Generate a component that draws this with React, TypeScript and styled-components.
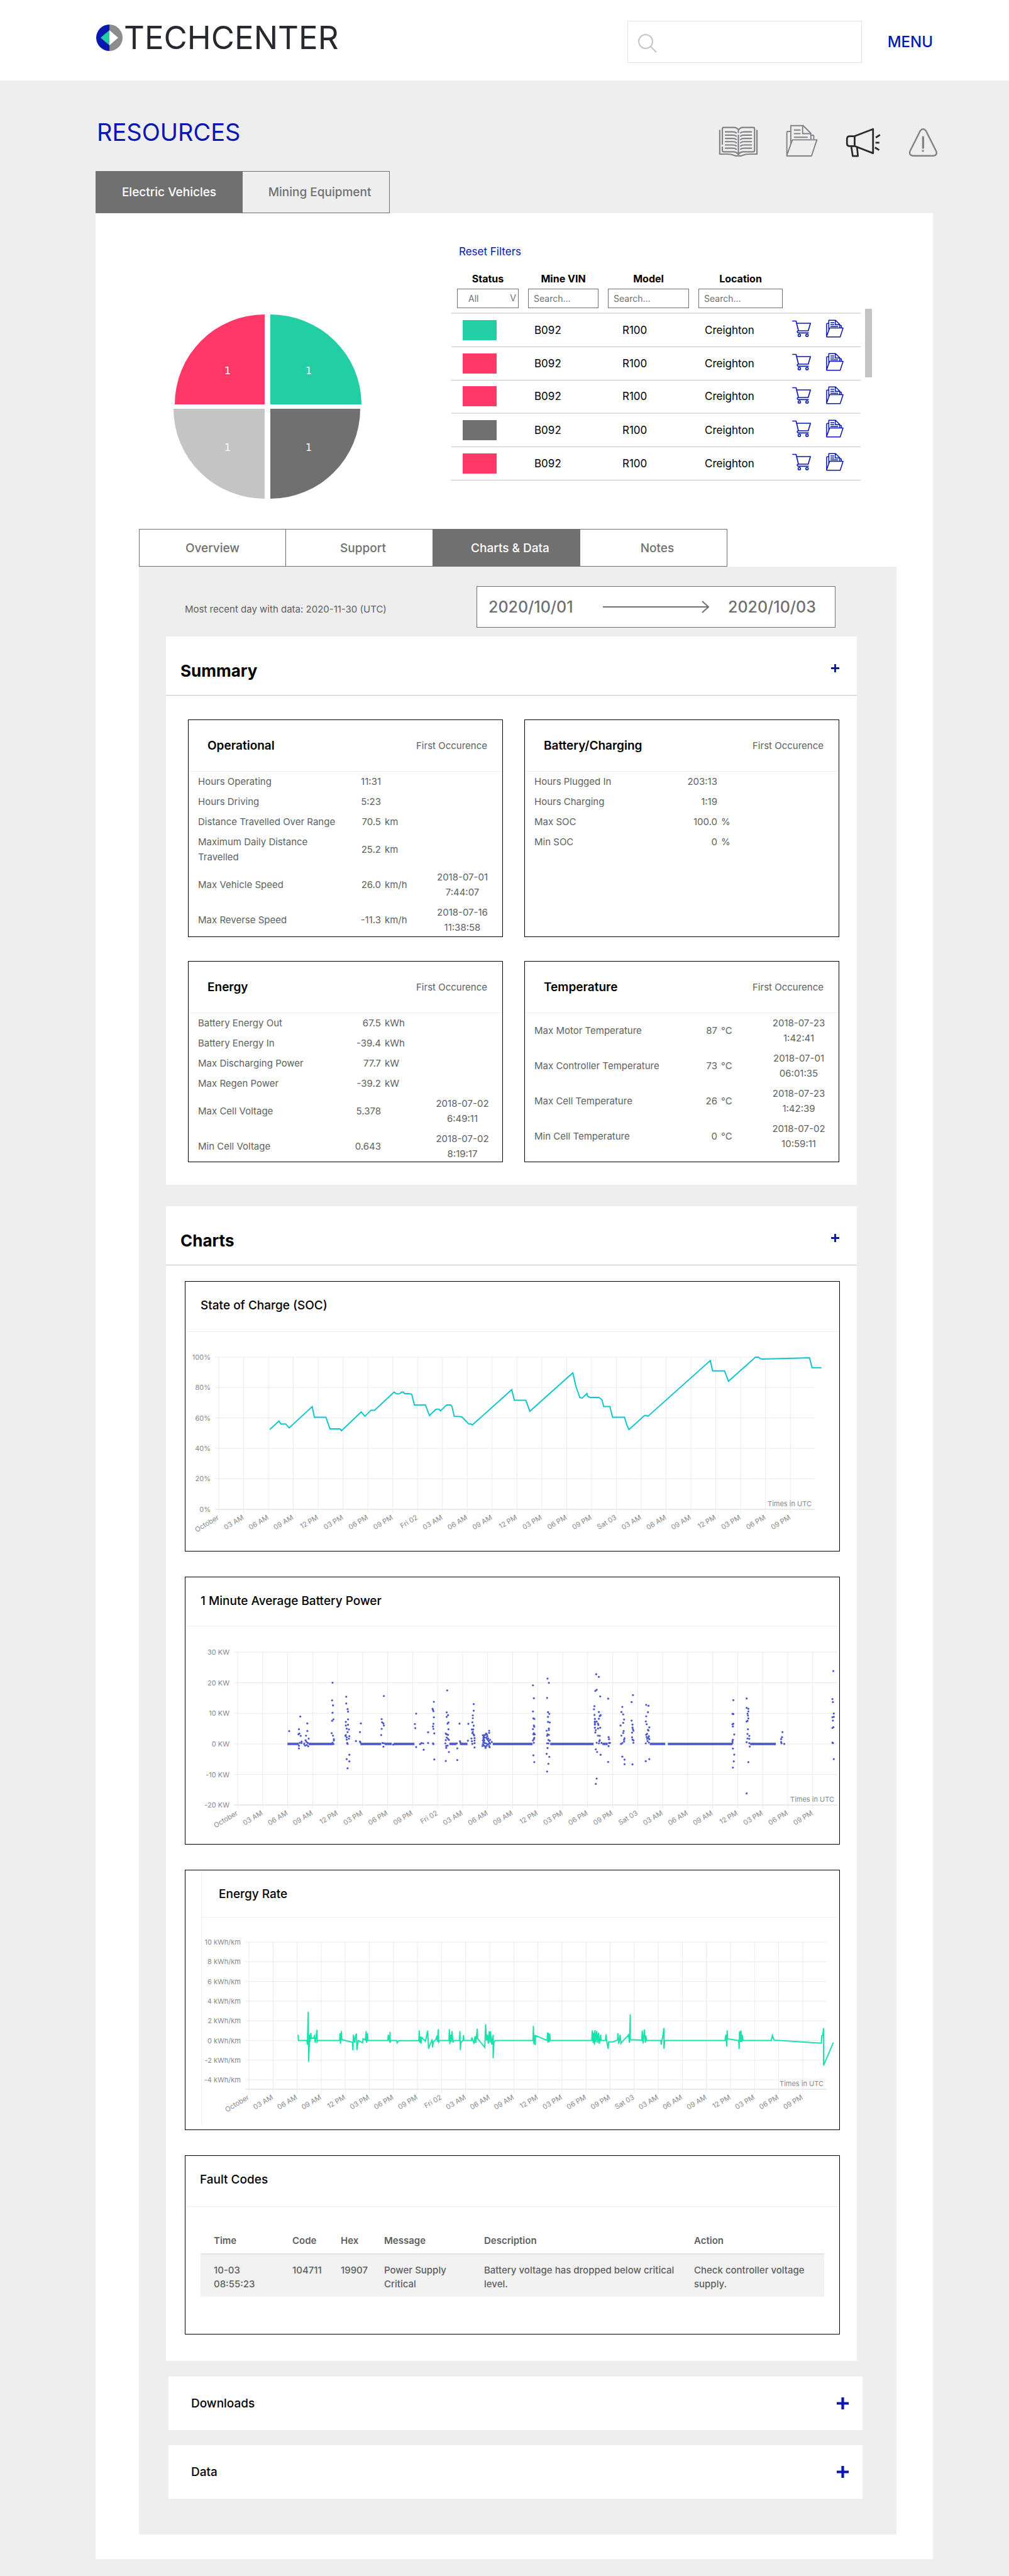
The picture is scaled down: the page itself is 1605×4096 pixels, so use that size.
import React from "react";
import styled, { createGlobalStyle } from "styled-components";

const c = {
  blue: "#0817b0",
  green: "#22cea4",
  pink: "#ff3868",
  grey: "#707070",
  silver: "#c4c4c4",
  page: "#eeeeee",
  text: "#5d5f61",
  faint: "#eeefef",
};

const Global = createGlobalStyle`
  *, *::before, *::after { box-sizing: border-box; }
  body { margin: 0; background: ${c.page}; font-family: Inter, "Liberation Sans", sans-serif; color: #000; }
  button, input, select { font: inherit; color: inherit; }
  button { cursor: pointer; background: none; border: 0; padding: 0; }
  h1, h2, h3 { margin: 0; }
  table { border-collapse: collapse; }
  svg { display: block; }
`;

/* ---------- top bar ---------- */

const TopBar = styled.header`
  display: flex;
  align-items: flex-start;
  justify-content: space-between;
  height: 128px;
  padding: 33px 121px 0 153px;
  background: #fff;
`;

const Brand = styled.a`
  display: flex;
  align-items: center;
  gap: 2px;
  margin-top: 5px;
  color: #26292d;
  font-size: 51px;
  line-height: 44px;
  text-decoration: none;
`;

const TopTools = styled.div`
  display: flex;
  align-items: center;
  gap: 41px;
`;

const SearchBox = styled.label`
  display: flex;
  align-items: center;
  gap: 12px;
  width: 373px;
  height: 67px;
  padding: 0 16px;
  border: 1px solid #e2e2e2;

  input {
    flex: 1;
    min-width: 0;
    border: 0;
    outline: 0;
    font-size: 20px;
  }
`;

const MenuButton = styled.button`
  color: ${c.blue};
  font-size: 24px;
  font-weight: 500;
  line-height: 32px;
`;

/* ---------- page frame ---------- */

const Page = styled.main`
  padding: 60px 121px 27px 152px;
`;

const TitleRow = styled.div`
  display: flex;
  justify-content: space-between;
  height: 62px;
  margin-bottom: 22px;
`;

const PageTitle = styled.h1`
  padding-left: 2px;
  color: ${c.blue};
  font-size: 38px;
  font-weight: 400;
  line-height: 44px;
`;

const IconLinks = styled.nav`
  display: flex;
  align-items: flex-end;
  gap: 44px;
  margin-right: -8px;
`;

const IconButton = styled.button<{ $color: string }>`
  color: ${(p) => p.$color};
`;

const Tabs = styled.div`
  display: flex;
`;

const Tab = styled.button<{ $active?: boolean; $height: number }>`
  width: 234px;
  height: ${(p) => p.$height}px;
  border: 1px solid ${c.grey};
  background: ${(p) => (p.$active ? c.grey : "transparent")};
  color: ${(p) => (p.$active ? "#fff" : c.grey)};
  font-size: 19px;
  font-weight: 500;
  text-align: center;

  & + & {
    padding-left: 12px;
    border-left: 0;
  }
`;

const Panel = styled.section`
  padding: 51px 58px 39px 69px;
  background: #fff;
`;

/* ---------- fleet overview ---------- */

const Fleet = styled.div`
  display: flex;
  align-items: flex-start;
  padding-right: 39px;
  padding-bottom: 48px;
`;

const PieBox = styled.div`
  flex: none;
  width: 300px;
  margin: 110px 142px 0 55px;
`;

const FleetList = styled.div`
  flex: 1;
`;

const ResetButton = styled.button`
  display: block;
  margin: 0 0 23px 12px;
  color: ${c.blue};
  font-size: 17px;
  line-height: 20px;
`;

const Scroller = styled.div`
  display: flex;
  align-items: flex-start;
  gap: 7px;
`;

const ScrollThumb = styled.div`
  flex: none;
  width: 11px;
  height: 109px;
  margin-top: 58px;
  background: ${c.silver};
`;

const FleetTable = styled.table`
  flex: 1;
  table-layout: fixed;

  th {
    padding: 0 15px 7px 0;
    font-size: 16px;
    font-weight: 700;
    line-height: 20px;
    vertical-align: top;
  }
  th:first-child { padding-left: 9px; }
  td {
    height: 53px;
    padding: 0 0 0 10px;
    border-top: 1px solid ${c.silver};
    font-size: 17px;
  }
  tbody tr:nth-child(3n + 1) td { border-top: 2px solid #dedede; }
  tbody tr:last-child td { border-bottom: 1px solid ${c.silver}; }
  td:first-child { padding-left: 18px; }
  td:nth-child(3) { padding-left: 23px; }
  td:nth-child(n + 5) { padding-left: 0; }
`;

const field = `
  display: block;
  width: 100%;
  height: 31px;
  border: 1px solid ${c.grey};
  border-radius: 0;
  background: #fff;
  color: ${c.grey};
  font-size: 14px;
  font-weight: 400;
`;

const FilterInput = styled.input`
  ${field}
  margin-top: 6px;
  padding: 0 8px;
  &::placeholder { color: ${c.grey}; opacity: 1; }
`;

const SelectWrap = styled.span`
  display: block;
  position: relative;
  margin-top: 6px;

  span {
    position: absolute;
    right: 4px;
    top: 5px;
    color: ${c.grey};
    font-size: 14px;
    font-weight: 400;
    pointer-events: none;
  }
`;

const FilterSelect = styled.select`
  ${field}
  appearance: none;
  padding: 0 17px;
`;

const Swatch = styled.span<{ $color: string }>`
  display: block;
  width: 54px;
  height: 32px;
  background: ${(p) => p.$color};
`;

/* ---------- details ---------- */

const Details = styled.div`
  padding: 31px 63px 57px 43px;
  background: ${c.page};
`;

const RangeRow = styled.div`
  display: flex;
  align-items: center;
  justify-content: space-between;
  margin-bottom: 14px;
  padding: 0 34px 0 30px;
`;

const RangeNote = styled.p`
  margin: 8px 0 0;
  color: ${c.text};
  font-size: 15px;
  line-height: 20px;
`;

const RangeBox = styled.div`
  display: flex;
  align-items: center;
  justify-content: space-between;
  width: 571px;
  height: 66px;
  padding: 0 18px;
  border: 1px solid ${c.grey};
  background: #fff;
  color: ${c.grey};

  input {
    width: 152px;
    padding: 0;
    border: 0;
    font-size: 25px;
    font-weight: 500;
  }
`;

const Card = styled.section`
  margin-bottom: 34px;
  background: #fff;
`;

const CardHead = styled.div`
  display: flex;
  align-items: flex-start;
  justify-content: space-between;
  padding: 40px 28px 23px 23px;
  border-bottom: 1px solid ${c.silver};

  h2 {
    font-size: 26px;
    font-weight: 700;
    line-height: 30px;
  }
  button {
    margin-top: 4px;
    color: ${c.blue};
  }
`;

const StatGrid = styled.div`
  display: grid;
  grid-template-columns: 1fr 1fr;
  grid-template-rows: 346px 320px;
  gap: 38px 34px;
  padding: 38px 28px 36px 35px;
`;

const StatCard = styled.section`
  border: 1px solid #000;
`;

const StatHead = styled.div`
  display: flex;
  align-items: center;
  justify-content: space-between;
  height: 82px;
  padding: 0 24px 0 30px;
  border-bottom: 1px solid ${c.faint};
  color: ${c.text};
  font-size: 15px;

  h3 {
    color: #000;
    font-size: 19px;
    font-weight: 600;
  }
`;

const StatTable = styled.table`
  width: 100%;
  table-layout: fixed;
  color: ${c.text};
  font-size: 15px;
  line-height: 24px;

  th, td { padding: 4px 0; font-weight: 400; text-align: left; }
  th { padding-left: 15px; }
  td:nth-child(2) { text-align: right; }
  td:nth-child(3) { padding-left: 6px; }
  td:nth-child(4) { text-align: center; }
  td span { display: block; }
`;

const ChartStack = styled.div`
  display: grid;
  gap: 40px;
  padding: 25px 27px 42px 30px;
`;

const ChartCard = styled.section<{ $height: number }>`
  min-height: ${(p) => p.$height}px;
  border: 1px solid #000;
`;

const ChartInset = styled.div`
  margin: 0 5px 0 25px;
  border-left: 1px solid ${c.faint};
`;

const ChartTitle = styled.h3<{ $height: number; $indent: number }>`
  height: ${(p) => p.$height}px;
  padding: 26px 0 0 ${(p) => p.$indent}px;
  border-bottom: 1px solid ${c.faint};
  font-size: 19px;
  font-weight: 500;
  line-height: 24px;
`;

const Plot = styled.svg`
  width: 100%;
  height: auto;
  overflow: visible;

  text {
    fill: #85888b;
    font-size: 11px;
    text-anchor: end;
  }
`;

const FaultTable = styled.table`
  width: calc(100% - 48px);
  margin: 34px 24px 0;
  table-layout: fixed;
  color: ${c.text};
  font-size: 15px;
  line-height: 22px;

  th {
    padding: 9px 0 9px 21px;
    font-weight: 600;
    text-align: left;
  }
  td {
    padding: 14px 0 9px 21px;
    border-top: 2px solid #e2e2e2;
    background: #f2f2f2;
    font-weight: 500;
    vertical-align: top;
  }
  td span { display: block; }
`;

const Accordion = styled.div`
  display: grid;
  gap: 24px;
  margin: -9px -9px 0 4px;
`;

const AccordionItem = styled.button`
  display: flex;
  align-items: center;
  justify-content: space-between;
  height: 85px;
  padding: 0 22px 0 36px;
  background: #fff;
  color: #000;
  font-size: 19px;
  font-weight: 500;

  svg { color: ${c.blue}; }
`;

/* ---------- drawings ---------- */

const LogoMark = () => (
  <svg width="42" height="42" viewBox="0 0 42 42" aria-hidden="true">
    <path d="M21 0A21 21 0 0 0 21 42Z" fill={c.blue} />
    <path d="M21 0A21 21 0 0 1 21 42Z" fill="#8c8c8c" />
    <path d="M21 9L7 21L21 33Z" fill={c.green} />
    <path d="M21 9L35 21L21 33Z" fill="#fff" />
  </svg>
);

const Magnifier = () => (
  <svg width="30" height="34" viewBox="0 -4 30 34" fill="none" stroke={c.silver} strokeWidth="2" aria-hidden="true">
    <circle cx="12" cy="12" r="11" />
    <path d="M20 20L29 29" />
  </svg>
);

const Book = () => (
  <svg width="63" height="50" viewBox="50 53 230 182" fill="none" stroke="currentColor" strokeWidth="8" strokeLinecap="round" strokeLinejoin="round" aria-hidden="true">
    <path d="M165 92V75Q155 62 138 62H80Q72 62 72 70V160M72 176V197Q72 204 80 204H138Q158 206 165 220Q172 206 192 204H250Q259 204 259 197V70Q259 62 250 62H192Q175 62 165 78M165 108V220" />
    <path d="M57 80V217H100Q125 217 143 225Q155 230 165 226Q175 230 187 225Q205 217 230 217H273V80" />
    {[88, 107, 126, 145, 164, 183].map((y) => (
      <path key={y} d={`M90 ${y}H132Q146 ${y} 153 ${y + 6}M241 ${y}H198Q184 ${y} 178 ${y + 6}`} />
    ))}
  </svg>
);

const Folder = ({ width, height }: { width: number; height: number }) => (
  <svg width={width} height={height} viewBox="450 49 187 190" fill="none" stroke="currentColor" strokeWidth={width > 40 ? 7 : 10} strokeLinejoin="round" aria-hidden="true">
    <path d="M479 89H462Q456 89 456 96V232H600L631 138H488L456 228" />
    <path d="M479 160V55H551L596 100V136M548 57V102H594M597 111H608Q613 111 613 117V136" />
    <path d="M500 81H533M500 102H533M500 123H575" strokeLinecap="round" />
  </svg>
);

const Megaphone = () => (
  <svg width="56" height="47" viewBox="784 60 202 170" fill="none" stroke="currentColor" strokeWidth="10" strokeLinejoin="round" aria-hidden="true">
    <path d="M836 109H808Q792 109 792 125V150Q792 166 808 166H836ZM836 109L942 68V207L836 166" />
    <path d="M817 170L825 223H855L850 174" />
    <path d="M958 117L982 101M956 146H978M953 174L977 189" />
  </svg>
);

const Alert = () => (
  <svg width="47" height="47" viewBox="1135 70 171 170" fill="none" stroke="currentColor" strokeWidth="9" strokeLinecap="round" strokeLinejoin="round" aria-hidden="true">
    <path d="M1204 87Q1220 68 1236 87L1296 206Q1304 226 1282 232H1160Q1136 228 1144 206Z" />
    <path d="M1220 124V186" strokeWidth="12" />
    <circle cx="1219" cy="204" r="6" fill="currentColor" stroke="none" />
  </svg>
);

const Cart = () => (
  <svg width="30" height="27" viewBox="53 61 110 98" fill="none" stroke="currentColor" strokeWidth="6" strokeLinejoin="round" aria-hidden="true">
    <path d="M54 66H76L90 123H147L160 79H80M90 123Q82 124 83 130Q84 135 90 135H150" />
    <circle cx="95" cy="149" r="7" />
    <circle cx="140" cy="149" r="7" />
  </svg>
);

const Plus = ({ size }: { size: number }) => (
  <svg width={size} height={size} viewBox="0 0 18 18" stroke="currentColor" strokeWidth="4" aria-hidden="true">
    <path d="M9 0V18M0 9H18" />
  </svg>
);

const LongArrow = () => (
  <svg width="170" height="20" viewBox="0 0 170 20" fill="none" stroke={c.grey} strokeWidth="2" aria-hidden="true">
    <path d="M0 10H168M158 1L168 10L158 19" />
  </svg>
);

const PieText = styled.text`
  fill: #fff;
  font: 16px "DejaVu Sans", sans-serif;
  text-anchor: middle;
`;

const Pie = () => (
  <svg width="300" height="293" viewBox="0 0 300 293" role="img" aria-label="Vehicles by status">
    <path d="M145 0V143H2A143 143 0 0 1 145 0Z" fill={c.pink} />
    <path d="M154 0V143H299A145 143 0 0 0 154 0Z" fill={c.green} />
    <path d="M145 293V150H0A145 143 0 0 0 145 293Z" fill={c.silver} />
    <path d="M154 293V150H297A143 143 0 0 1 154 293Z" fill={c.grey} />
    <PieText x="86" y="95">1</PieText>
    <PieText x="215" y="95">1</PieText>
    <PieText x="86" y="217">1</PieText>
    <PieText x="215" y="217">1</PieText>
  </svg>
);

/* ---------- charts ---------- */

type Point = [number, number];

const hours = ["October", "03 AM", "06 AM", "09 AM", "12 PM", "03 PM", "06 PM", "09 PM"];
const ticks = [...hours, "Fri 02", ...hours.slice(1), "Sat 03", ...hours.slice(1)];

interface AxesProps {
  left: number;
  right: number;
  top: number;
  bottom: number;
  step: number;
  rowStep: number;
  rows: string[];
}

const Axes = ({ left, right, top, bottom, step, rowStep, rows }: AxesProps) => (
  <g>
    <g stroke="#e9eaeb">
      {rows.map((r, i) => (
        <line key={r} x1={left - 6} x2={right} y1={top + i * rowStep} y2={top + i * rowStep} />
      ))}
      {ticks.map((_, i) => (
        <line key={i} x1={left + i * step} x2={left + i * step} y1={top} y2={bottom + 6} />
      ))}
      <line x1={left - 6} x2={right} y1={bottom} y2={bottom} strokeWidth="2" />
    </g>
    {rows.map((r, i) => (
      <text key={r} x={left - 13} y={top + i * rowStep + 4}>{r}</text>
    ))}
    {ticks.map((t, i) => (
      <text key={i} transform={`translate(${left + i * step + 1} ${bottom + 15}) rotate(-31)`}>{t}</text>
    ))}
    <text x={right - 5} y={bottom - 5}>Times in UTC</text>
  </g>
);

const place = (x0: number, y0: number, ky: number) => ([x, y]: Point): Point => [
  (x - x0) * 0.7037,
  (y - y0) * ky,
];

const parse = (s: string): Point[] => s.split(" ").map((p) => p.split(",").map(Number) as Point);

const toLine = (pts: Point[]) => pts.map(([x, y]) => `${x.toFixed(1)},${y.toFixed(1)}`).join(" ");

const soc = parse(
  "228,1000 249,965 253,977 264,977 272,993 324,905 329,949 355,949 364,997 387,997 390,1005 435,927 443,945 457,920 465,920 509,845 515,852 522,851 526,845 530,845 533,851 543,851 549,854 555,898 580,898 589,942 604,916 611,916 614,923 628,898 637,898 640,905 645,945 662,947 678,977 683,977 686,981 775,835 781,879 807,879 816,924 913,765 920,820 929,867 934,870 945,851 947,863 952,867 972,867 979,877 983,905 997,905 1003,949 1030,949 1035,980 1040,1000 1075,942 1079,942 1083,945 1224,714 1229,757 1256,757 1265,800 1326,700 1333,700 1336,706 1341,708 1448,703 1454,744 1475,744"
);

const power = parse(
  "272,871 297,793 294,861 295,884 293,888 298,896 300,926 296,933 300,934 294,949 294,963 313,830 313,870 310,895 309,920 311,928 316,911 314,934 308,948 315,952 312,945 370,613 369,707 371,734 370,773 372,808 369,816 368,882 371,895 373,914 373,921 370,933 372,940 401,688 401,724 404,754 405,767 405,808 400,822 400,841 405,837 402,858 407,862 404,876 400,892 408,898 402,904 407,911 402,916 403,934 404,939 399,896 408,997 402,1020 408,1032 404,1069 423,924 434,830 432,876 432,926 433,932 481,807 482,824 485,830 486,841 481,859 480,892 486,684 485,954 483,934 486,936 507,943 556,833 557,855 559,778 559,956 568,940 571,935 575,936 576,970 586,877 586,934 596,752 598,765 597,758 599,715 599,797 598,832 597,846 598,859 600,883 597,936 598,940 600,1022 629,654 628,771 631,786 628,795 632,825 630,831 632,861 626,884 628,888 631,891 628,905 631,912 626,919 633,918 625,936 627,960 627,950 630,948 633,982 626,1030 652,963 652,1025 657,831 658,925 659,932 651,936 677,832 676,922 689,727 689,762 687,787 687,802 686,824 689,842 685,862 688,862 687,875 686,882 689,888 690,894 684,910 691,908 691,921 685,925 691,935 686,939 691,958 710,893 713,893 712,900 711,907 714,905 712,914 710,920 713,922 711,930 714,934 710,940 712,947 709,950 715,952 717,884 719,889 716,890 720,898 718,905 719,912 717,936 720,942 718,950 716,960 722,910 721,918 724,869 724,880 726,918 723,925 725,933 722,940 726,938 724,950 725,957 730,929 823,627 825,696 823,766 824,803 826,806 825,841 826,848 823,860 825,882 827,888 824,888 826,907 825,914 823,921 825,933 824,1000 826,1036 856,591 859,614 855,694 857,770 860,779 857,795 857,822 861,825 859,857 859,865 854,869 856,888 859,891 855,896 858,918 861,923 855,936 858,936 856,961 854,992 860,1008 858,1045 855,1086 966,568 972,582 967,651 964,657 975,686 962,738 961,755 972,769 962,785 976,786 974,791 963,806 972,805 963,820 967,820 963,827 970,831 963,836 971,838 963,853 970,857 975,853 965,866 964,878 970,895 974,896 974,919 973,925 967,933 972,936 978,934 965,968 968,982 976,997 967,1124 965,1152 993,698 994,903 995,914 995,934 997,934 994,951 993,1035 1025,742 1023,769 1027,782 1029,809 1027,827 1021,841 1028,870 1027,881 1023,895 1030,909 1029,917 1029,927 1025,935 1022,939 1025,1007 1030,1023 1030,1047 1049,679 1046,716 1046,815 1048,836 1048,852 1049,861 1050,869 1047,879 1047,904 1048,916 1050,920 1050,933 1048,1048 1079,731 1084,736 1083,770 1079,792 1078,819 1080,834 1086,851 1083,864 1084,868 1081,885 1079,890 1085,898 1080,902 1084,906 1081,912 1086,914 1082,924 1085,932 1078,936 1086,1020 1078,1031 1276,706 1274,779 1276,780 1274,834 1276,832 1275,846 1278,889 1275,917 1274,925 1274,934 1275,964 1278,996 1277,1032 1275,1065 1306,697 1306,747 1310,752 1310,766 1308,778 1309,788 1310,803 1308,816 1306,820 1309,861 1308,886 1312,896 1308,910 1312,912 1306,930 1312,935 1313,953 1310,1036 1306,1203 1387,876 1386,903 1384,913 1384,929 1385,936 1391,939 1502,551 1500,700 1501,716 1503,777 1500,797 1503,795 1501,815 1502,850 1500,854 1500,932 1501,935 1503,1020"
);

const idle = parse(
  "268,294 304,308 316,370 433,480 488,504 508,555 634,650 658,675 732,822 862,960 980,992 1087,1122 1128,1274 1314,1372"
);

const rate = parse(
  "292,961 293,992 312,992 313,1015 315,833 316,1109 318,960 319,1000 321,950 322,980 327,980 329,968 331,1005 333,965 335,933 335,1000 337,992 386,992 387,952 388,1010 390,940 391,988 415,1002 416,1047 417,960 420,1005 422,965 424,955 425,1045 428,992 438,1005 439,982 444,990 446,940 447,1005 449,952 450,992 495,992 496,960 499,1000 500,945 500,1005 502,992 515,992 516,1005 520,993 565,992 566,937 567,1003 568,970 570,1010 571,975 580,996 583,960 585,938 587,1037 595,985 596,1030 598,1000 604,985 606,965 607,1000 609,930 610,1000 612,992 633,992 634,930 635,1012 637,960 638,1000 640,940 642,1003 644,992 657,992 658,940 659,1045 660,1005 665,990 666,962 667,992 684,992 685,975 690,1010 692,968 694,1005 697,927 698,982 714,1030 716,902 718,992 720,960 722,1010 724,942 726,1005 727,942 730,1015 733,960 733,1090 735,1000 738,992 823,992 824,912 825,1012 827,962 828,1018 829,965 855,992 856,948 857,1005 858,950 860,1000 861,955 862,992 956,992 957,937 959,1005 960,950 962,1015 963,935 965,1000 967,940 969,1005 971,950 973,1010 976,960 977,992 987,992 988,958 990,1000 993,1038 994,1000 1004,1000 1014,990 1015,952 1017,1012 1020,960 1022,1008 1024,1000 1038,965 1039,957 1041,1005 1043,848 1043,988 1069,990 1070,938 1072,1008 1074,955 1075,932 1077,1005 1078,965 1080,992 1112,992 1113,1015 1117,960 1119,924 1119,1037 1121,992 1257,992 1259,960 1261,1025 1262,937 1263,983 1288,992 1289,1040 1290,942 1292,1000 1293,937 1295,1000 1296,960 1298,992 1362,992 1364,965 1368,990 1475,1007 1476,965 1478,965 1480,924 1480,1130 1502,1003"
);

const SocChart = () => (
  <Plot viewBox="0 0 1040 340" role="img" aria-label="State of charge over time">
    <Axes left={53} right={1001} top={40} bottom={282} step={39.53} rowStep={48.36} rows={["100%", "80%", "60%", "40%", "20%", "0%"]} />
    <polyline points={toLine(soc.map(place(37.5, 596, 0.3838)))} fill="none" stroke="#10c5cf" strokeWidth="2" />
  </Plot>
);

const PowerChart = () => {
  const at = place(37.5, 313, 0.29855);
  return (
    <Plot viewBox="0 0 1040 340" role="img" aria-label="Battery power over time">
      <Axes left={83} right={1037} top={41} bottom={284} step={39.77} rowStep={48.66} rows={["30 KW", "20 KW", "10 KW", "0 KW", "-10 KW", "-20 KW"]} />
      <g stroke="#5560d2" strokeWidth="4">
        {idle.map(([a, b]) => (
          <line key={a} x1={at([a, 0])[0]} x2={at([b, 0])[0]} y1={at([0, 939])[1]} y2={at([0, 939])[1]} />
        ))}
      </g>
      <g fill="#4a56cf">
        {power.map(at).map(([x, y], i) => (
          <circle key={i} cx={x} cy={y} r="1.6" />
        ))}
      </g>
    </Plot>
  );
};

const RateChart = () => (
  <Plot viewBox="26 0 1009 330" role="img" aria-label="Energy rate over time">
    <Axes left={101} right={1020} top={39} bottom={273} step={38.3} rowStep={31.3} rows={["10 kWh/km", "8 kWh/km", "6 kWh/km", "4 kWh/km", "2 kWh/km", "0 kWh/km", "-2 kWh/km", "-4 kWh/km"]} />
    <polyline points={toLine(rate.map(place(37.5, 313, 0.28788)))} fill="none" stroke="#17e3ad" strokeWidth="2" />
  </Plot>
);

/* ---------- data ---------- */

const vehicles = [c.green, c.pink, c.pink, c.grey, c.pink];

interface Stat {
  label: string;
  value: string;
  unit?: string;
  when?: [string, string];
}

const stats: { title: string; rows: Stat[] }[] = [
  {
    title: "Operational",
    rows: [
      { label: "Hours Operating", value: "11:31" },
      { label: "Hours Driving", value: "5:23" },
      { label: "Distance Travelled Over Range", value: "70.5", unit: "km" },
      { label: "Maximum Daily Distance Travelled", value: "25.2", unit: "km" },
      { label: "Max Vehicle Speed", value: "26.0", unit: "km/h", when: ["2018-07-01", "7:44:07"] },
      { label: "Max Reverse Speed", value: "-11.3", unit: "km/h", when: ["2018-07-16", "11:38:58"] },
    ],
  },
  {
    title: "Battery/Charging",
    rows: [
      { label: "Hours Plugged In", value: "203:13" },
      { label: "Hours Charging", value: "1:19" },
      { label: "Max SOC", value: "100.0", unit: "%" },
      { label: "Min SOC", value: "0", unit: "%" },
    ],
  },
  {
    title: "Energy",
    rows: [
      { label: "Battery Energy Out", value: "67.5", unit: "kWh" },
      { label: "Battery Energy In", value: "-39.4", unit: "kWh" },
      { label: "Max Discharging Power", value: "77.7", unit: "kW" },
      { label: "Max Regen Power", value: "-39.2", unit: "kW" },
      { label: "Max Cell Voltage", value: "5.378", when: ["2018-07-02", "6:49:11"] },
      { label: "Min Cell Voltage", value: "0.643", when: ["2018-07-02", "8:19:17"] },
    ],
  },
  {
    title: "Temperature",
    rows: [
      { label: "Max Motor Temperature", value: "87", unit: "°C", when: ["2018-07-23", "1:42:41"] },
      { label: "Max Controller Temperature", value: "73", unit: "°C", when: ["2018-07-01", "06:01:35"] },
      { label: "Max Cell Temperature", value: "26", unit: "°C", when: ["2018-07-23", "1:42:39"] },
      { label: "Min Cell Temperature", value: "0", unit: "°C", when: ["2018-07-02", "10:59:11"] },
    ],
  },
];

const Columns = ({ widths }: { widths: (number | string)[] }) => (
  <colgroup>
    {widths.map((width, i) => (
      <col key={i} width={width} />
    ))}
  </colgroup>
);

const SectionHead = ({ title }: { title: string }) => (
  <CardHead>
    <h2>{title}</h2>
    <button type="button" aria-label={`Toggle ${title}`}>
      <Plus size={13} />
    </button>
  </CardHead>
);

export default function App() {
  return (
    <>
      <Global />
      <TopBar>
        <Brand href="#">
          <LogoMark />
          TECHCENTER
        </Brand>
        <TopTools>
          <SearchBox>
            <Magnifier />
            <input type="search" aria-label="Search" />
          </SearchBox>
          <MenuButton type="button">MENU</MenuButton>
        </TopTools>
      </TopBar>

      <Page>
        <TitleRow>
          <PageTitle>RESOURCES</PageTitle>
          <IconLinks>
            <IconButton $color="#808285" type="button" aria-label="Manuals"><Book /></IconButton>
            <IconButton $color="#808285" type="button" aria-label="Documents"><Folder width={51} height={52} /></IconButton>
            <IconButton $color="#26292d" type="button" aria-label="Announcements"><Megaphone /></IconButton>
            <IconButton $color="#808285" type="button" aria-label="Alerts"><Alert /></IconButton>
          </IconLinks>
        </TitleRow>

        <Tabs role="tablist">
          <Tab role="tab" $height={67} $active aria-selected>Electric Vehicles</Tab>
          <Tab role="tab" $height={67}>Mining Equipment</Tab>
        </Tabs>

        <Panel>
          <Fleet>
            <PieBox>
              <Pie />
            </PieBox>
            <FleetList>
              <ResetButton type="button">Reset Filters</ResetButton>
              <Scroller>
                <FleetTable>
                  <Columns widths={[122, 127, 144, 149, 54, 55]} />
                  <thead>
                    <tr>
                      <th>
                        <label htmlFor="status">Status</label>
                        <SelectWrap>
                          <FilterSelect id="status" defaultValue="All">
                            <option>All</option>
                          </FilterSelect>
                          <span aria-hidden="true">V</span>
                        </SelectWrap>
                      </th>
                      {["Mine VIN", "Model", "Location"].map((name) => (
                        <th key={name}>
                          <label htmlFor={name}>{name}</label>
                          <FilterInput id={name} placeholder="Search..." />
                        </th>
                      ))}
                      <th />
                      <th />
                    </tr>
                  </thead>
                  <tbody>
                    {vehicles.map((color, i) => (
                      <tr key={i}>
                        <td><Swatch $color={color} /></td>
                        <td>B092</td>
                        <td>R100</td>
                        <td>Creighton</td>
                        <td><IconButton $color={c.blue} type="button" aria-label="Order parts"><Cart /></IconButton></td>
                        <td><IconButton $color={c.blue} type="button" aria-label="Open documents"><Folder width={28} height={29} /></IconButton></td>
                      </tr>
                    ))}
                  </tbody>
                </FleetTable>
                <ScrollThumb />
              </Scroller>
            </FleetList>
          </Fleet>

          <Tabs role="tablist">
            {["Overview", "Support", "Charts & Data", "Notes"].map((name) => (
              <Tab key={name} role="tab" $height={60} $active={name === "Charts & Data"}>{name}</Tab>
            ))}
          </Tabs>

          <Details>
            <RangeRow>
              <RangeNote>Most recent day with data: 2020-11-30 (UTC)</RangeNote>
              <RangeBox>
                <input type="text" aria-label="From" defaultValue="2020/10/01" />
                <LongArrow />
                <input type="text" aria-label="To" defaultValue="2020/10/03" />
              </RangeBox>
            </RangeRow>

            <Card>
              <SectionHead title="Summary" />
              <StatGrid>
                {stats.map((group) => (
                  <StatCard key={group.title}>
                    <StatHead>
                      <h3>{group.title}</h3>
                      <span>First Occurence</span>
                    </StatHead>
                    <StatTable>
                      <Columns widths={[240, 66, 66, "auto"]} />
                      <tbody>
                        {group.rows.map((row) => (
                          <tr key={row.label}>
                            <th scope="row">{row.label}</th>
                            <td>{row.value}</td>
                            <td>{row.unit}</td>
                            <td>
                              {row.when?.map((part) => (
                                <span key={part}>{part}</span>
                              ))}
                            </td>
                          </tr>
                        ))}
                      </tbody>
                    </StatTable>
                  </StatCard>
                ))}
              </StatGrid>
            </Card>

            <Card>
              <SectionHead title="Charts" />
              <ChartStack>
                <ChartCard $height={430}>
                  <ChartTitle $height={80} $indent={24}>State of Charge (SOC)</ChartTitle>
                  <SocChart />
                </ChartCard>
                <ChartCard $height={426}>
                  <ChartTitle $height={78} $indent={24}>1 Minute Average Battery Power</ChartTitle>
                  <PowerChart />
                </ChartCard>
                <ChartCard $height={414}>
                  <ChartInset>
                    <ChartTitle $height={75} $indent={27}>Energy Rate</ChartTitle>
                    <RateChart />
                  </ChartInset>
                </ChartCard>
                <ChartCard $height={285}>
                  <ChartTitle $height={81} $indent={23}>Fault Codes</ChartTitle>
                  <FaultTable>
                    <Columns widths={[125, 77, 69, 159, 334, "auto"]} />
                    <thead>
                      <tr>
                        <th>Time</th>
                        <th>Code</th>
                        <th>Hex</th>
                        <th>Message</th>
                        <th>Description</th>
                        <th>Action</th>
                      </tr>
                    </thead>
                    <tbody>
                      <tr>
                        <td><span>10-03</span><span>08:55:23</span></td>
                        <td>104711</td>
                        <td>19907</td>
                        <td>Power Supply Critical</td>
                        <td>Battery voltage has dropped below critical level.</td>
                        <td>Check controller voltage supply.</td>
                      </tr>
                    </tbody>
                  </FaultTable>
                </ChartCard>
              </ChartStack>
            </Card>

            <Accordion>
              {["Downloads", "Data"].map((name) => (
                <AccordionItem key={name} type="button" aria-expanded="false">
                  {name}
                  <Plus size={19} />
                </AccordionItem>
              ))}
            </Accordion>
          </Details>
        </Panel>
      </Page>
    </>
  );
}
